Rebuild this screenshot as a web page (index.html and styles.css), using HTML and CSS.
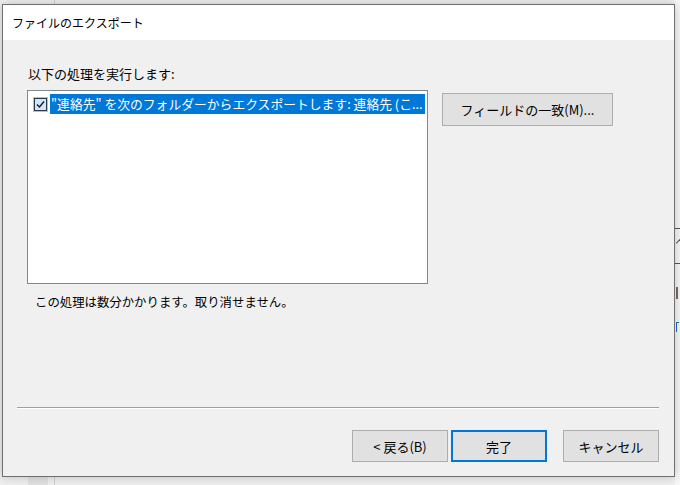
FILE: index.html
```html
<!DOCTYPE html>
<html lang="ja">
<head>
    <meta charset="UTF-8">
    <title>ファイルのエクスポート</title>
    <link rel="stylesheet" href="styles.css">
</head>
<body>
    <div class="desk">
        <!-- 後ろのウィンドウの端 -->
        <div class="back-vline"></div>
        <div class="back-block"></div>
        <div class="back-right">
            <div class="br-line br-line1"></div>
            <div class="br-slash"></div>
            <div class="br-line br-line2"></div>
            <div class="br-mark br-brown"></div>
            <div class="br-mark br-blue"></div>
        </div>

        <div class="dialog">
            <div class="titlebar">ファイルのエクスポート</div>
            <div class="content">
                <div class="label">以下の処理を実行します:</div>
                <div class="row">
                    <div class="listbox">
                        <div class="item">
                            <span class="check">
                                <svg width="11" height="11" viewBox="0 0 11 11">
                                    <path d="M2 5.5 L4.5 8 L9 2.5" fill="none" stroke="#1b1b1b" stroke-width="1.4"/>
                                </svg>
                            </span>
                            <span class="item-text">"連絡先" を次のフォルダーからエクスポートします: 連絡先 (こ...</span>
                        </div>
                    </div>
                    <button class="btn btn-map">フィールドの一致(M)...</button>
                </div>
                <div class="note">この処理は数分かかります。取り消せません。</div>
                <div class="separator"></div>
                <div class="buttons">
                    <button class="btn">&lt; 戻る(B)</button>
                    <button class="btn btn-default">完了</button>
                    <button class="btn btn-cancel">キャンセル</button>
                </div>
            </div>
        </div>
    </div>
</body>
</html>
```

FILE: styles.css
```css
html, body {
    margin: 0;
    padding: 0;
}
body {
    width: 680px;
    height: 485px;
    overflow: hidden;
    background: #f0f0f0;
    font-family: "Noto Sans CJK JP", "Noto Sans", sans-serif;
    font-size: 12px;
    color: #000;
}
.desk {
    position: relative;
    width: 680px;
    height: 485px;
    overflow: hidden;
}
.back-vline {
    position: absolute;
    left: 54px;
    top: 0;
    width: 1px;
    height: 485px;
    background: #d0d0d0;
}
.back-block {
    position: absolute;
    left: 28px;
    top: 477px;
    width: 20px;
    height: 8px;
    background: #e2e2e2;
}
.back-right {
    position: absolute;
    left: 675px;
    top: 0;
    width: 5px;
    height: 485px;
    background: #f7f7f7;
    overflow: hidden;
}
.br-line {
    position: absolute;
    left: 0;
    width: 5px;
    height: 1px;
    background: #555;
}
.br-line1 { top: 228px; }
.br-line2 { top: 263px; }
.br-slash {
    position: absolute;
    left: 0;
    top: 240px;
    width: 8px;
    height: 1px;
    background: #555;
    transform: rotate(-45deg);
}
.br-mark {
    position: absolute;
    left: 1px;
    width: 2px;
}
.br-brown {
    top: 287px;
    height: 12px;
    background: #7a6a5a;
}
.br-blue {
    top: 322px;
    height: 9px;
    border-top: 1px solid #1a6fc4;
    border-left: 1px solid #1a6fc4;
}
.dialog {
    position: absolute;
    left: 2px;
    top: 4px;
    width: 671px;
    height: 471px;
    border: 1px solid #6f6f6f;
    background: #f0f0f0;
    box-shadow: 0 0 10px rgba(0, 0, 0, 0.22);
}
.titlebar {
    height: 35px;
    line-height: 35px;
    padding-left: 9px;
    background: #fff;
    font-size: 12px;
}
.content {
    display: flex;
    flex-direction: column;
}
.label {
    margin: 26px 0 0 25px;
    line-height: 16px;
    font-size: 13px;
}
.row {
    display: flex;
    margin-top: 8px;
}
.listbox {
    margin-left: 24px;
    width: 399px;
    height: 192px;
    border: 1px solid #828790;
    background: #fff;
}
.item {
    display: flex;
    align-items: center;
    margin-top: 3px;
    height: 20px;
}
.check {
    display: flex;
    align-items: center;
    justify-content: center;
    margin-left: 6px;
    width: 11px;
    height: 11px;
    border: 1px solid #2b3a4a;
    background: #cfe5f8;
    box-shadow: 0 0 0 1px #9cc8ef;
}
.item-text {
    margin-left: 3px;
    flex: 1;
    height: 20px;
    line-height: 20px;
    padding-left: 1px;
    background: #0078d7;
    color: #fff;
    font-size: 12.8px;
    white-space: nowrap;
    overflow: hidden;
    margin-right: 2px;
}
.btn {
    font-family: "Noto Sans CJK JP", "Noto Sans", sans-serif;
    font-size: 13px;
    color: #000;
    background: #e1e1e1;
    border: 1px solid #adadad;
    width: 96px;
    height: 32px;
    padding: 0;
    margin: 0;
}
.btn-map {
    margin: 3px 0 0 14px;
    width: 171px;
    height: 33px;
}
.note {
    margin: 10px 0 0 32px;
    line-height: 16px;
    font-size: 12.4px;
}
.separator {
    margin: 97px 0 0 14px;
    width: 642px;
    height: 1px;
    background: #a0a0a0;
    border-bottom: 1px solid #fff;
}
.buttons {
    display: flex;
    margin: 21px 0 0 349px;
}
.btn-default {
    margin-left: 3px;
    border: 2px solid #0078d7;
}
.btn-cancel {
    margin-left: 16px;
}
```
